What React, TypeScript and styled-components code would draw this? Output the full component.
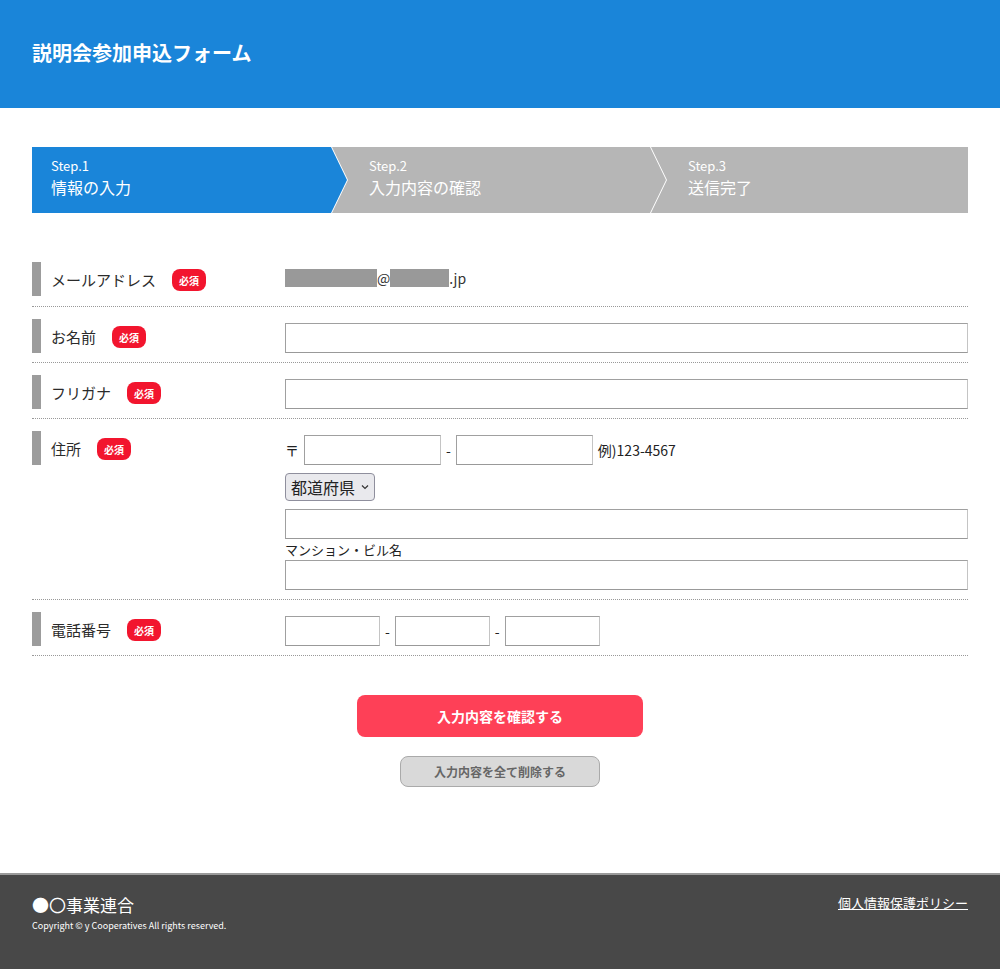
import React from 'react';
import styled, {createGlobalStyle, css} from "styled-components";

const GlobalStyle = createGlobalStyle`
  body {
    margin: 0;
    background: #fff;
    color: #333;
    font-family: "Noto Sans CJK JP", "Noto Sans", sans-serif;
  }
`

const Header = styled.header`
  height: 108px;
  background: #1a85d9;
  display: flex;
  align-items: center;
  padding: 0 32px 4px;
  box-sizing: border-box;
`
const Title = styled.h1`
  margin: 0;
  font-size: 20px;
  font-weight: 700;
  color: #fff;
  letter-spacing: 0;
`
const Main = styled.main`
  width: 936px;
  margin: 0 auto;
  padding-top: 39px;
`
const Steps = styled.ol`
  list-style: none;
  margin: 0;
  padding: 0;
  display: flex;
  height: 66px;
`

interface IStepProps {
    $active?: boolean,
    $first?: boolean,
    $last?: boolean,
    $width?: number,
}

const Step = styled.li<IStepProps>`
  box-sizing: border-box;
  height: 66px;
  padding-top: 10px;
  color: #fff;
  background: ${props => props.$active ? '#1a85d9' : '#b6b6b6'};
  ${props => props.$width ? css`flex: 0 0 ${props.$width}px;` : css`flex: 1;`}
  margin-left: ${props => props.$first ? 0 : -15}px;
  padding-left: ${props => props.$first ? 19 : 37}px;
  clip-path: ${props => props.$first
          ? 'polygon(0 0, calc(100% - 16px) 0, 100% 50%, calc(100% - 16px) 100%, 0 100%)'
          : props.$last
                  ? 'polygon(0 0, 100% 0, 100% 100%, 0 100%, 16px 50%)'
                  : 'polygon(0 0, calc(100% - 16px) 0, 100% 50%, calc(100% - 16px) 100%, 0 100%, 16px 50%)'};
`
const StepNum = styled.div`
  font-size: 13px;
  line-height: 18px;
`
const StepName = styled.div`
  font-size: 16px;
  line-height: 24px;
`

const Form = styled.form`
  margin-top: 36px;
`
const Row = styled.div<{ $tall?: boolean }>`
  display: grid;
  grid-template-columns: 253px 1fr;
  padding: ${props => props.$tall ? '13px 0 10px' : '12px 0 9px'};
  border-bottom: 1px dotted #999;
`
const Label = styled.div`
  box-sizing: border-box;
  height: 34px;
  border-left: 9px solid #9c9c9c;
  padding-left: 10px;
  display: flex;
  align-items: center;
  gap: 16px;
  font-size: 15px;
  color: #2b2b2b;
`
const Required = styled.span`
  display: inline-flex;
  align-items: center;
  justify-content: center;
  width: 34px;
  height: 22px;
  border-radius: 8px;
  background: #f2152e;
  color: #fff;
  font-size: 10px;
  font-weight: 700;
  margin-top: 2px;
`
const Field = styled.div<{ $plain?: boolean }>`
  padding-top: ${props => props.$plain ? 0 : 4}px;
  display: flex;
  flex-direction: column;
  ${props => props.$plain && css`
    flex-direction: row;
    align-items: center;
    height: 32px;
  `}
  font-size: 14px;
  color: #333;
`
const Masked = styled.span<{ $w: number }>`
  display: inline-block;
  width: ${props => props.$w}px;
  height: 18px;
  background: #999;
`
const Line = styled.div`
  display: flex;
  align-items: center;
  gap: 5px;
`
const Input = styled.input<{ $w?: number }>`
  box-sizing: border-box;
  height: 30px;
  width: ${props => props.$w ? `${props.$w}px` : '100%'};
  border: 1px solid #a0a0a0;
  border-right-color: #c4c4c4;
  border-bottom-color: #999;
  padding: 0 6px;
  font-size: 14px;
  font-family: inherit;
  background: #fff;
  margin: 0;
`
const Note = styled.span`
  font-size: 14px;
  color: #222;
`
const SelectWrap = styled.div`
  position: relative;
  width: 90px;
  margin: 8px 0 8px;
`
const Select = styled.select`
  appearance: none;
  box-sizing: border-box;
  width: 90px;
  height: 28px;
  border: 1px solid #8f8f9d;
  border-radius: 4px;
  background: #e9e9ed;
  color: #222;
  font-size: 16px;
  font-family: inherit;
  padding: 0 0 0 5px;
  margin: 0;
`
const Caret = styled.svg`
  position: absolute;
  right: 6px;
  top: 11px;
  pointer-events: none;
`
const SubLabel = styled.div`
  font-size: 13px;
  line-height: 21px;
  color: #222;
`

const Actions = styled.div`
  display: flex;
  flex-direction: column;
  align-items: center;
  gap: 19px;
  padding: 39px 0 86px;
`
const Button = styled.button<{ $variant: 'primary' | 'secondary' }>`
  border-radius: 8px;
  font-family: inherit;
  font-weight: 700;
  cursor: pointer;
  ${props => props.$variant === 'primary' ? css`
    width: 286px;
    height: 42px;
    border: none;
    background: #fe4057;
    color: #fff;
    font-size: 14px;
  ` : css`
    width: 200px;
    height: 31px;
    border: 1px solid #aaa;
    background: #d9d9d9;
    color: #666;
    font-size: 12px;
  `}
`

const Footer = styled.footer`
  background: #484848;
  border-top: 2px solid #9a9a9a;
  height: 96px;
  box-sizing: border-box;
  padding: 18px 32px 0;
  display: flex;
  justify-content: space-between;
  align-items: flex-start;
  color: #fff;
`
const Org = styled.div`
  font-size: 17px;
  line-height: 24px;
`
const Copyright = styled.div`
  font-size: 9px;
  line-height: 14px;
  margin-top: 2px;
`
const PolicyLink = styled.a`
  color: #fff;
  font-size: 13px;
  line-height: 20px;
  text-decoration: underline;
`

const steps = [
    {num: 'Step.1', name: '情報の入力', width: 315},
    {num: 'Step.2', name: '入力内容の確認', width: 334},
    {num: 'Step.3', name: '送信完了'},
]

const App = () => {
    return (
        <>
            <GlobalStyle/>
            <Header>
                <Title>説明会参加申込フォーム</Title>
            </Header>
            <Main>
                <Steps>
                    {steps.map((step, i) => (
                        <Step key={step.num}
                              $active={i === 0}
                              $first={i === 0}
                              $last={i === steps.length - 1}
                              $width={step.width}>
                            <StepNum>{step.num}</StepNum>
                            <StepName>{step.name}</StepName>
                        </Step>
                    ))}
                </Steps>
                <Form onSubmit={e => e.preventDefault()}>
                    <Row $tall>
                        <Label>メールアドレス<Required>必須</Required></Label>
                        <Field $plain>
                            <Masked $w={92}/>@<Masked $w={59}/>.jp
                        </Field>
                    </Row>
                    <Row>
                        <Label>お名前<Required>必須</Required></Label>
                        <Field><Input type="text"/></Field>
                    </Row>
                    <Row>
                        <Label>フリガナ<Required>必須</Required></Label>
                        <Field><Input type="text"/></Field>
                    </Row>
                    <Row>
                        <Label>住所<Required>必須</Required></Label>
                        <Field>
                            <Line>
                                <Note>〒</Note>
                                <Input type="text" $w={137}/>
                                <Note>-</Note>
                                <Input type="text" $w={137}/>
                                <Note>例)123-4567</Note>
                            </Line>
                            <SelectWrap>
                                <Select defaultValue="">
                                    <option value="">都道府県</option>
                                </Select>
                                <Caret width="8" height="6" viewBox="0 0 8 6">
                                    <path d="M1 1.5 L4 4.5 L7 1.5" fill="none" stroke="#333" strokeWidth="1.2"/>
                                </Caret>
                            </SelectWrap>
                            <Input type="text"/>
                            <SubLabel>マンション・ビル名</SubLabel>
                            <Input type="text"/>
                        </Field>
                    </Row>
                    <Row>
                        <Label>電話番号<Required>必須</Required></Label>
                        <Field>
                            <Line>
                                <Input type="tel" $w={95}/>
                                <Note>-</Note>
                                <Input type="tel" $w={95}/>
                                <Note>-</Note>
                                <Input type="tel" $w={95}/>
                            </Line>
                        </Field>
                    </Row>
                    <Actions>
                        <Button type="submit" $variant="primary">入力内容を確認する</Button>
                        <Button type="reset" $variant="secondary">入力内容を全て削除する</Button>
                    </Actions>
                </Form>
            </Main>
            <Footer>
                <div>
                    <Org>●〇事業連合</Org>
                    <Copyright>Copyright © y Cooperatives All rights reserved.</Copyright>
                </div>
                <PolicyLink href="#">個人情報保護ポリシー</PolicyLink>
            </Footer>
        </>
    );
};

export default App;
